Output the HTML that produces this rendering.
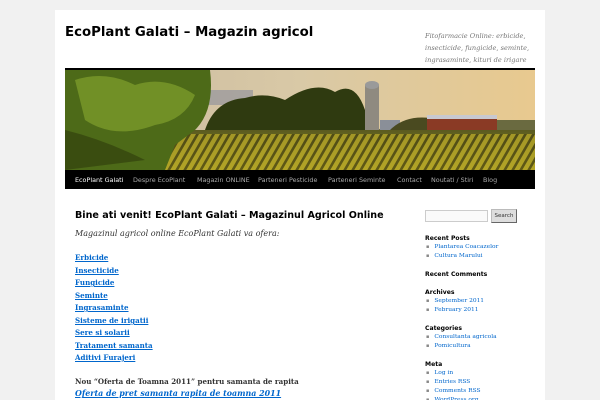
<!DOCTYPE html>
<html><head><meta charset="utf-8"><style>
*{margin:0;padding:0;box-sizing:border-box}
html,body{width:600px;height:400px;overflow:hidden}
body{background:#f1f1f1;font-family:"DejaVu Sans","Liberation Sans",sans-serif;position:relative}
#page{position:absolute;left:55px;top:10px;width:490px;height:390px;background:#fff;overflow:hidden}
.t{position:absolute;white-space:nowrap}
#title{left:10px;top:15px;font-size:13.3px;font-weight:bold;color:#000}
#desc{left:370px;top:20px;font-family:"DejaVu Serif",serif;font-style:italic;font-size:6.6px;line-height:12px;color:#777;white-space:normal;width:115px}
#img{position:absolute;left:10px;top:58px;width:470px;height:102px;border-top:2px solid #000;overflow:hidden}
#nav{position:absolute;left:10px;top:160px;width:470px;height:19px;background:#000;font-size:6.4px;color:#aaa}
#nav span{position:absolute;top:6px}
#h1{left:20px;top:200px;font-size:9.6px;font-weight:bold;color:#000}
.c{font-family:"DejaVu Serif",serif;font-size:8px;color:#333}
.l{left:20px;font-family:"DejaVu Serif",serif;font-size:7.1px;font-weight:bold;color:#0066cc;text-decoration:underline}
.sb{position:absolute;left:370px;font-size:6.1px;line-height:9px}
.sh{font-weight:bold;color:#000}
.sl{font-family:"DejaVu Serif",serif;font-size:5.9px;color:#0066cc;line-height:9px}
.sl:before{content:"\25AA";color:#888;margin:0 5px 0 1px;font-size:5px}
</style></head><body>
<div id="page">
<div class="t" id="title">EcoPlant Galati – Magazin agricol</div>
<div class="t" id="desc">Fitofarmacie Online: erbicide, insecticide, fungicide, seminte, ingrasaminte, kituri de irigare</div>
<div id="img"><svg width="470" height="100" viewBox="0 0 470 100">
<defs><linearGradient id="sky" x1="0" y1="0" x2="1" y2="0"><stop offset="0" stop-color="#c9b9a0"/><stop offset="0.5" stop-color="#d9c9a6"/><stop offset="1" stop-color="#e8c98f"/></linearGradient>
<linearGradient id="fld" x1="0" y1="0" x2="0" y2="1"><stop offset="0" stop-color="#5a5a20"/><stop offset="1" stop-color="#a09a20"/></linearGradient>
<pattern id="rows" width="8" height="40" patternUnits="userSpaceOnUse" patternTransform="skewX(-30)"><rect width="8" height="40" fill="#b8a828"/><rect width="3" height="40" fill="#4a4512"/></pattern></defs>
<rect width="470" height="100" fill="url(#sky)"/>
<rect x="128" y="20" width="60" height="15" fill="#8a8d9c" opacity=".6"/>
<path d="M140 60 Q150 30 180 28 Q200 22 220 30 Q250 10 270 22 Q290 10 300 40 L315 60 Z" fill="#2f3a10"/>
<rect x="300" y="15" width="14" height="45" fill="#8f8a80"/><ellipse cx="307" cy="15" rx="7" ry="4" fill="#9a9a9a"/>
<rect x="315" y="50" width="20" height="12" fill="#8a8f98"/>
<path d="M325 60 Q340 45 365 48 L365 62 Z" fill="#4a4a20"/>
<rect x="362" y="47" width="70" height="16" fill="#8a3a25"/><rect x="362" y="45" width="70" height="4" fill="#c8c8d0"/>
<rect x="432" y="50" width="38" height="12" fill="#6a6a40"/>
<rect x="100" y="60" width="370" height="40" fill="url(#fld)"/>
<rect x="100" y="64" width="370" height="36" fill="url(#rows)" opacity=".75"/>
<path d="M0 0 H145 Q150 40 130 60 L110 75 L100 100 H0 Z" fill="#4d6a18"/>
<path d="M10 10 Q40 0 70 15 Q100 5 130 25 Q120 50 90 55 Q50 70 20 50 Z" fill="#7a9a2a" opacity=".8"/>
<path d="M0 60 Q40 70 80 90 L0 100 Z" fill="#3a4d10"/>
</svg></div>
<div id="nav">
<span style="left:10px;color:#fff">EcoPlant Galati</span>
<span style="left:68px">Despre EcoPlant</span>
<span style="left:132px">Magazin ONLINE</span>
<span style="left:193px">Parteneri Pesticide</span>
<span style="left:263px">Parteneri Seminte</span>
<span style="left:332px">Contact</span>
<span style="left:366px">Noutati / Stiri</span>
<span style="left:418px">Blog</span>
</div>
<div class="t" id="h1">Bine ati venit! EcoPlant Galati – Magazinul Agricol Online</div>
<div class="t c" style="left:20px;top:219px;font-style:italic">Magazinul agricol online EcoPlant Galati va ofera:</div>
<div class="t l" style="top:243px">Erbicide</div>
<div class="t l" style="top:256px">Insecticide</div>
<div class="t l" style="top:268px">Fungicide</div>
<div class="t l" style="top:281px">Seminte</div>
<div class="t l" style="top:293px">Ingrasaminte</div>
<div class="t l" style="top:306px">Sisteme de irigatii</div>
<div class="t l" style="top:318px">Sere si solarii</div>
<div class="t l" style="top:331px">Tratament samanta</div>
<div class="t l" style="top:343px">Aditivi Furajeri</div>
<div class="t c" style="left:20px;top:367px;font-weight:bold;font-size:7.1px">Nou “Oferta de Toamna 2011” pentru samanta de rapita</div>
<div class="t l" style="top:379px;font-style:italic;font-size:7.9px">Oferta de pret samanta rapita de toamna 2011</div>
<div class="sb" style="top:200px;width:63px;height:12px;border:1px solid #ccc;background:#fafafa"></div>
<div class="sb" style="left:436px;top:199px;width:26px;height:14px;background:#ddd;border:1px solid #bbb;border-right-color:#666;border-bottom-color:#666;font-size:5.5px;text-align:center;line-height:12px;color:#333">Search</div>
<div class="sb" style="top:224px"><div class="sh">Recent Posts</div><div class="sl">Plantarea Coacazelor</div><div class="sl">Cultura Marului</div></div>
<div class="sb" style="top:260px"><div class="sh">Recent Comments</div></div>
<div class="sb" style="top:278px"><div class="sh">Archives</div><div class="sl">September 2011</div><div class="sl">February 2011</div></div>
<div class="sb" style="top:314px"><div class="sh">Categories</div><div class="sl">Consultanta agricola</div><div class="sl">Pomicultura</div></div>
<div class="sb" style="top:350px"><div class="sh">Meta</div><div class="sl">Log in</div><div class="sl">Entries RSS</div><div class="sl">Comments RSS</div><div class="sl">WordPress.org</div></div>
</div>
</body></html>
